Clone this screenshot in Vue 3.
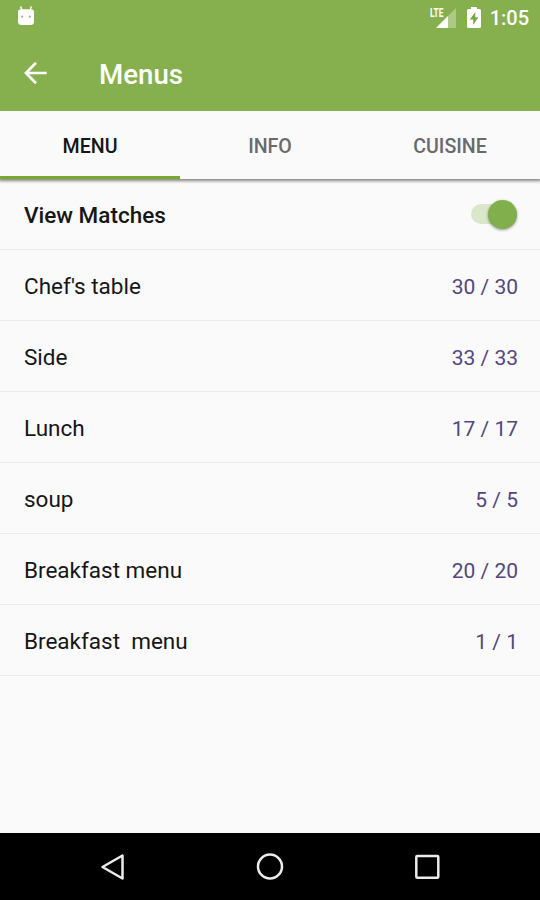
<script setup>
const tabs = ['MENU', 'INFO', 'CUISINE']
const menus = [
  { name: "Chef's table", count: '30 / 30' },
  { name: 'Side', count: '33 / 33' },
  { name: 'Lunch', count: '17 / 17' },
  { name: 'soup', count: '5 / 5' },
  { name: 'Breakfast menu', count: '20 / 20' },
  { name: 'Breakfast  menu', count: '1 / 1' },
]
</script>

<template>
  <div class="screen">
    <header class="header">
      <div class="status">
        <svg class="droid" width="18" height="20" viewBox="0 0 18 20">
          <path d="M3.6 .6 5 4.5M14.4 .6 13 4.5" stroke="#fff" stroke-width="1.5" />
          <path d="M1 6Q1 3.2 4 3.2H14Q17 3.2 17 6V15.5Q17 19 13.5 19H4.5Q1 19 1 15.5Z" fill="#fff" />
          <circle cx="5.2" cy="10.7" r="1.1" fill="#a3b388" />
          <circle cx="12.8" cy="10.7" r="1.1" fill="#a3b388" />
        </svg>
        <div class="indicators">
          <div class="signal">
            <span class="lte">LTE</span>
            <svg width="20" height="20" viewBox="0 0 20 20">
              <path d="M20 0V20H0Z" fill="#fff" opacity=".32" />
              <path d="M12 8V20H0Z" fill="#fff" />
            </svg>
          </div>
          <svg class="battery" width="14" height="21" viewBox="0 0 14 21">
            <path d="M4 0H10V2H12.5Q14 2 14 3.5V19.5Q14 21 12.5 21H1.5Q0 21 0 19.5V3.5Q0 2 1.5 2H4Z" fill="#fff" />
            <path d="M8.3 5 2.8 12.5H6.2V18L11.3 10.3H8.3Z" fill="#79a44a" />
          </svg>
          <span class="clock">1:05</span>
        </div>
      </div>
      <div class="appbar">
        <svg class="back" width="24" height="24" viewBox="0 0 24 24" fill="none" stroke="#fff" stroke-width="2.7">
          <path d="M22.7 12H2.5M12 1.8 2 12 12 22.2" />
        </svg>
        <h1 class="title">Menus</h1>
      </div>
    </header>
    <nav class="tabs">
      <div v-for="(tab, i) in tabs" :key="tab" class="tab" :class="{ active: i === 0 }">{{ tab }}</div>
    </nav>
    <main class="list">
      <div class="row">
        <span class="matches">View Matches</span>
        <div class="switch"><div class="thumb"></div></div>
      </div>
      <div v-for="menu in menus" :key="menu.name" class="row">
        <span class="name">{{ menu.name }}</span>
        <span class="count">{{ menu.count }}</span>
      </div>
    </main>
    <footer class="navbar">
      <svg width="28" height="28" viewBox="0 0 28 28"><path d="M23.5 2.5V25.5L3.5 14Z" /></svg>
      <svg width="28" height="28" viewBox="0 0 28 28"><circle cx="14" cy="13.5" r="12" /></svg>
      <svg width="28" height="28" viewBox="0 0 28 28"><rect x="3.3" y="3" width="22" height="21.7" rx="1" /></svg>
    </footer>
  </div>
</template>

<style>
body {
  margin: 0;
}
</style>

<style scoped>
.screen {
  width: 540px;
  height: 900px;
  display: flex;
  flex-direction: column;
  overflow: hidden;
  background: #fafafa;
  font-family: Roboto, sans-serif;
  color: #161616;
}
.header {
  height: 111px;
  flex: none;
  position: relative;
  z-index: 1;
  background: #86b04e;
  color: #fff;
}
.status {
  height: 36px;
  padding: 0 11px 0 17px;
  display: flex;
  justify-content: space-between;
  align-items: center;
  box-sizing: border-box;
}
.droid {
  margin-top: -4px;
}
.indicators {
  display: flex;
  align-items: center;
}
.signal {
  display: flex;
  align-items: flex-end;
  position: relative;
  height: 20px;
  margin: 0 11px 1px 0;
}
.signal svg {
  display: block;
}
.lte {
  position: absolute;
  left: -6px;
  top: -1px;
  font: 700 13px/12px Roboto, sans-serif;
  transform: scaleX(.64);
  transform-origin: left;
}
.battery {
  margin-right: 9px;
  margin-bottom: 2px;
}
.clock {
  font-size: 20px;
  font-weight: 500;
  line-height: 36px;
}
.appbar {
  height: 75px;
  padding-left: 24px;
  display: flex;
  align-items: center;
}
.back {
  margin: -1px 51px 0 0;
}
.title {
  margin: 2px 0 0;
  font-size: 27.7px;
  font-weight: 500;
  line-height: 36px;
}
.tabs {
  height: 68px;
  flex: none;
  display: flex;
  box-shadow: 0 1px 3px 1px rgba(0, 0, 0, .48);
}
.tab {
  width: 180px;
  height: 68px;
  box-sizing: border-box;
  padding-top: 5px;
  border-bottom: 3px solid transparent;
  display: flex;
  align-items: center;
  justify-content: center;
  font-size: 19.6px;
  font-weight: 500;
  color: #6a6a6a;
}
.tab.active {
  color: #161616;
  border-color: #7ba62e;
}
.list {
  flex: 1;
}
.row {
  height: 71px;
  box-sizing: border-box;
  border-bottom: 1px solid #ececec;
  padding: 1px 22px 0 24px;
  display: flex;
  align-items: center;
  justify-content: space-between;
  font-size: 22.5px;
}
.matches {
  font-weight: 500;
}
.name {
  white-space: pre;
}
.count {
  padding-top: 2px;
  color: #54467e;
  font-size: 21px;
}
.switch {
  width: 46px;
  height: 20px;
  border-radius: 10px;
  background: #dae7cb;
  display: flex;
  align-items: center;
  justify-content: flex-end;
  margin: -1px 1px 0 0;
}
.thumb {
  width: 29px;
  height: 29px;
  border-radius: 50%;
  background: #80af4b;
  box-shadow: 0 1px 3px rgba(0, 0, 0, .4);
}
.navbar {
  height: 67px;
  flex: none;
  padding: 0 99px;
  display: flex;
  align-items: center;
  justify-content: space-between;
  background: #000;
}
.navbar svg {
  fill: none;
  stroke: #ececec;
  stroke-width: 2.5;
  stroke-linejoin: round;
}
</style>
